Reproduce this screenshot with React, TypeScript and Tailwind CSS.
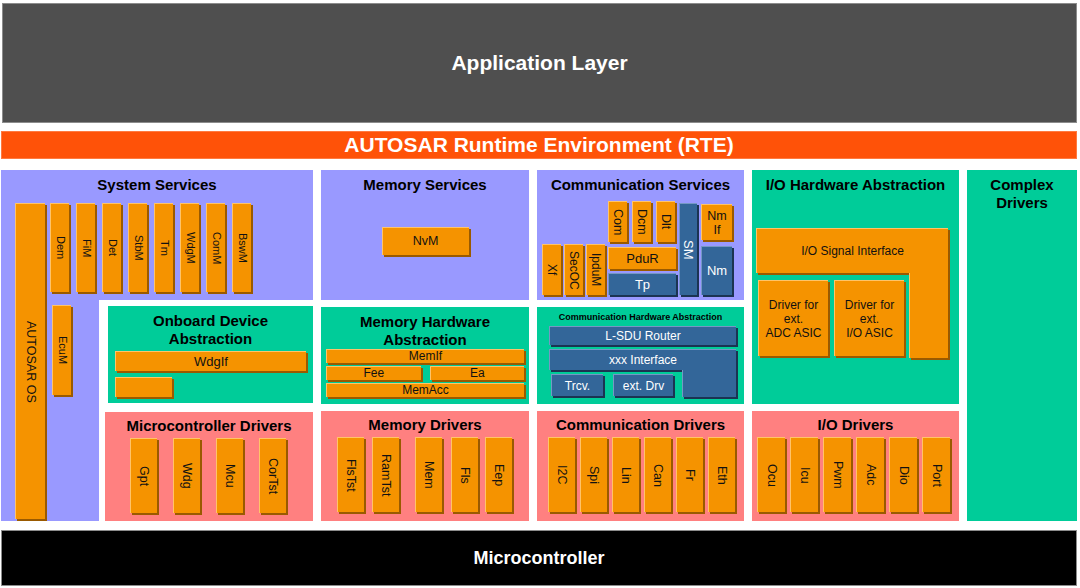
import type { ReactNode } from "react";

const orange = "bg-[#f59300] border-t border-l border-[#ffc468] shadow-[2px_2px_0_#9a5a00] text-[#111]";
const blue = "bg-[#336699] border-t border-l border-[#7598c4] shadow-[2px_2px_0_#1b3452] text-white";

function VBox({ label, className = "", tone = orange }: { label: string; className?: string; tone?: string }) {
  return (
    <div className={`flex shrink-0 items-center justify-center ${tone} ${className}`}>
      <span className="[writing-mode:vertical-rl] whitespace-nowrap leading-none">{label}</span>
    </div>
  );
}

function HBox({ children, className = "", tone = orange }: { children?: ReactNode; className?: string; tone?: string }) {
  return (
    <div className={`flex shrink-0 items-center justify-center text-center whitespace-nowrap ${tone} ${className}`}>
      {children}
    </div>
  );
}

function Title({ children, className = "" }: { children: ReactNode; className?: string }) {
  return <div className={`text-center text-[15px] font-bold leading-[18px] text-black ${className}`}>{children}</div>;
}

const sysModules = ["Dem", "FiM", "Det", "StbM", "Tm", "WdgM", "ComM", "BswM"];
const memDrv = [
  { l: "FlsTst", m: "" },
  { l: "RamTst", m: "ml-[8px]" },
  { l: "Mem", m: "ml-[16px]" },
  { l: "Fls", m: "ml-[9px]" },
  { l: "Eep", m: "ml-[7px]" },
];

export default function App() {
  return (
    <div className="w-[1080px] h-[588px] overflow-hidden bg-white pt-[3px] font-['Liberation_Sans',Arial,sans-serif]">
      <div className="ml-[1px] w-[1076px]">
        <div className="ml-[1px] flex h-[120px] items-center justify-center border border-[#8c8c8c] bg-[#4f4f4f] text-[21px] font-bold text-white">
          Application Layer
        </div>
        <div className="mt-[8px] flex h-[28px] items-center justify-center border border-[#ff7a40] bg-[#ff5208] text-[21px] font-bold text-white">
          AUTOSAR Runtime Environment (RTE)
        </div>

        <div className="mt-[11px] grid h-[351px] grid-cols-[312px_208px_207px_207px_1fr] grid-rows-[130px_97px_110px] gap-x-[8px] gap-y-[7px]">
          {/* System services with the L-shaped strip */}
          <div className="col-start-1 row-start-1 row-span-3 grid grid-cols-[49px_49px_1fr] grid-rows-[33px_97px_1fr] bg-[#9999ff]">
            <Title className="col-start-1 col-span-3 row-start-1 pt-[6px]">System Services</Title>
            <div className="col-start-1 row-start-2 row-span-2 pl-[14px] pb-[2px]">
              <VBox label="AUTOSAR OS" className="h-full w-[30px] text-[12.5px]" />
            </div>
            <div className="col-start-2 col-span-2 row-start-2 flex items-start gap-[7px]">
              {sysModules.map((m) => (
                <VBox key={m} label={m} className="h-[89px] w-[19px] text-[11px]" />
              ))}
            </div>
            <div className="col-start-2 row-start-3 pl-[2px] pt-[5px]">
              <VBox label="EcuM" className="h-[90px] w-[19px] text-[11px]" />
            </div>
            <div className="col-start-3 row-start-3 flex flex-col gap-[9px] bg-white pl-[6px] pt-[6px]">
              <div className="ml-[3px] h-[97px] shrink-0 bg-[#00cc99] px-[7px] pt-[6px]">
                <Title>
                  Onboard Device
                  <br />
                  Abstraction
                </Title>
                <HBox className="mt-[3px] h-[20px] text-[13px]">WdgIf</HBox>
                <HBox className="mt-[6px] h-[20px] w-[57px]" />
              </div>
              <div className="flex-1 bg-[#ff8080] pt-[5px]">
                <Title>Microcontroller Drivers</Title>
                <div className="mt-[3px] flex justify-center gap-[16px] pr-[2px]">
                  {["Gpt", "Wdg", "Mcu", "CorTst"].map((m) => (
                    <VBox key={m} label={m} className="h-[75px] w-[27px] text-[12.5px]" />
                  ))}
                </div>
              </div>
            </div>
          </div>

          {/* Memory services */}
          <div className="col-start-2 row-start-1 bg-[#9999ff] pt-[6px]">
            <Title>Memory Services</Title>
            <HBox className="mx-auto mt-[33px] h-[28px] w-[87px] text-[12.5px]">NvM</HBox>
          </div>

          {/* Communication services */}
          <div className="col-start-3 row-start-1 flex flex-col bg-[#9999ff] pt-[6px]">
            <Title>Communication Services</Title>
            <div className="flex flex-1 items-end pb-[5px] pl-[5px]">
              <div className="flex gap-[3px]">
                {["Xf", "SecOC", "IpduM"].map((m) => (
                  <VBox key={m} label={m} className="h-[51px] w-[19px] text-[12px]" />
                ))}
              </div>
              <div className="ml-[3px] flex w-[68px] flex-col">
                <div className="flex gap-[5px]">
                  {["Com", "Dcm", "Dlt"].map((m) => (
                    <VBox key={m} label={m} className="h-[41px] w-[19px] text-[12.5px]" />
                  ))}
                </div>
                <HBox className="mt-[5px] h-[22px] text-[13px]">PduR</HBox>
                <HBox tone={blue} className="mt-[4px] h-[22px] text-[13px]">
                  Tp
                </HBox>
              </div>
              <VBox tone={blue} label="SM" className="ml-[3px] h-[92px] w-[18px] text-[13px]" />
              <div className="ml-[4px] flex w-[31px] flex-col">
                <HBox className="h-[36px] text-[12.5px] leading-[14px]">
                  Nm
                  <br />
                  If
                </HBox>
                <HBox tone={blue} className="mt-[6px] h-[49px] text-[13px]">
                  Nm
                </HBox>
              </div>
            </div>
          </div>

          {/* I/O hardware abstraction */}
          <div className="col-start-4 row-start-1 row-span-2 bg-[#00cc99] pt-[6px]">
            <Title>I/O Hardware Abstraction</Title>
            <div className="ml-[4px] mr-[11px] mt-[34px] flex flex-col">
              <HBox className="h-[45px] text-[12px]">I/O Signal Interface</HBox>
              <div className="flex h-[85px]">
                <div className="flex w-[153px] gap-[6px] pl-[2px] pt-[7px]">
                  <HBox className="h-[76px] w-[70px] text-[12px] leading-[14px]">
                    Driver for
                    <br />
                    ext.
                    <br />
                    ADC ASIC
                  </HBox>
                  <HBox className="h-[76px] w-[70px] text-[12px] leading-[14px]">
                    Driver for
                    <br />
                    ext.
                    <br />
                    I/O ASIC
                  </HBox>
                </div>
                <div className="flex-1 border-l border-[#ffc468] bg-[#f59300] shadow-[2px_2px_0_#9a5a00]" />
              </div>
            </div>
          </div>

          {/* Complex drivers */}
          <div className="col-start-5 row-start-1 row-span-3 bg-[#00cc99] pt-[6px]">
            <Title>
              Complex
              <br />
              Drivers
            </Title>
          </div>

          {/* Memory hardware abstraction */}
          <div className="col-start-2 row-start-2 bg-[#00cc99] px-[5px] pt-[6px]">
            <Title>
              Memory Hardware
              <br />
              Abstraction
            </Title>
            <HBox className="h-[14px] text-[12px] leading-[13px]">MemIf</HBox>
            <div className="mt-[3px] flex gap-[9px]">
              <HBox className="h-[14px] flex-1 text-[12px] leading-[13px]">Fee</HBox>
              <HBox className="h-[14px] flex-1 text-[12px] leading-[13px]">Ea</HBox>
            </div>
            <HBox className="mt-[3px] h-[14px] text-[12px] leading-[13px]">MemAcc</HBox>
          </div>

          {/* Communication hardware abstraction */}
          <div className="col-start-3 row-start-2 bg-[#00cc99] pl-[12px] pr-[8px] pt-[5px]">
            <div className="-ml-[7px] -mr-[3px] text-center text-[9px] font-bold leading-[11px] text-black">
              Communication Hardware Abstraction
            </div>
            <HBox tone={blue} className="mt-[3px] h-[19px] text-[12px]">
              L-SDU Router
            </HBox>
            <div className="mt-[4px] flex flex-col">
              <HBox tone={blue} className="h-[21px] text-[12px]">
                xxx Interface
              </HBox>
              <div className="flex h-[27px]">
                <div className="flex w-[133px] gap-[10px] pl-[2px] pt-[4px]">
                  <HBox tone={blue} className="h-[22px] w-[52px] text-[12px]">
                    Trcv.
                  </HBox>
                  <HBox tone={blue} className="h-[22px] w-[60px] text-[12px]">
                    ext. Drv
                  </HBox>
                </div>
                <div className="flex-1 border-l border-[#7598c4] bg-[#336699] shadow-[2px_2px_0_#1b3452]" />
              </div>
            </div>
          </div>

          {/* Memory drivers */}
          <div className="col-start-2 row-start-3 bg-[#ff8080] pt-[5px]">
            <Title>Memory Drivers</Title>
            <div className="mt-[3px] flex pl-[16px]">
              {memDrv.map((d) => (
                <VBox key={d.l} label={d.l} className={`h-[75px] w-[27px] text-[12.5px] ${d.m}`} />
              ))}
            </div>
          </div>

          {/* Communication drivers */}
          <div className="col-start-3 row-start-3 bg-[#ff8080] pt-[5px]">
            <Title>Communication Drivers</Title>
            <div className="mt-[3px] flex gap-[5px] pl-[11px]">
              {["I2C", "Spi", "Lin", "Can", "Fr", "Eth"].map((m) => (
                <VBox key={m} label={m} className="h-[75px] w-[27px] text-[12.5px]" />
              ))}
            </div>
          </div>

          {/* I/O drivers */}
          <div className="col-start-4 row-start-3 bg-[#ff8080] pt-[5px]">
            <Title>I/O Drivers</Title>
            <div className="mt-[3px] flex gap-[5px] pl-[5px]">
              {["Ocu", "Icu", "Pwm", "Adc", "Dio", "Port"].map((m) => (
                <VBox key={m} label={m} className="h-[75px] w-[28px] text-[12.5px]" />
              ))}
            </div>
          </div>
        </div>

        <div className="mt-[9px] flex h-[56px] items-center justify-center border border-[#8c8c8c] bg-black text-[18px] font-bold text-white">
          Microcontroller
        </div>
      </div>
    </div>
  );
}
